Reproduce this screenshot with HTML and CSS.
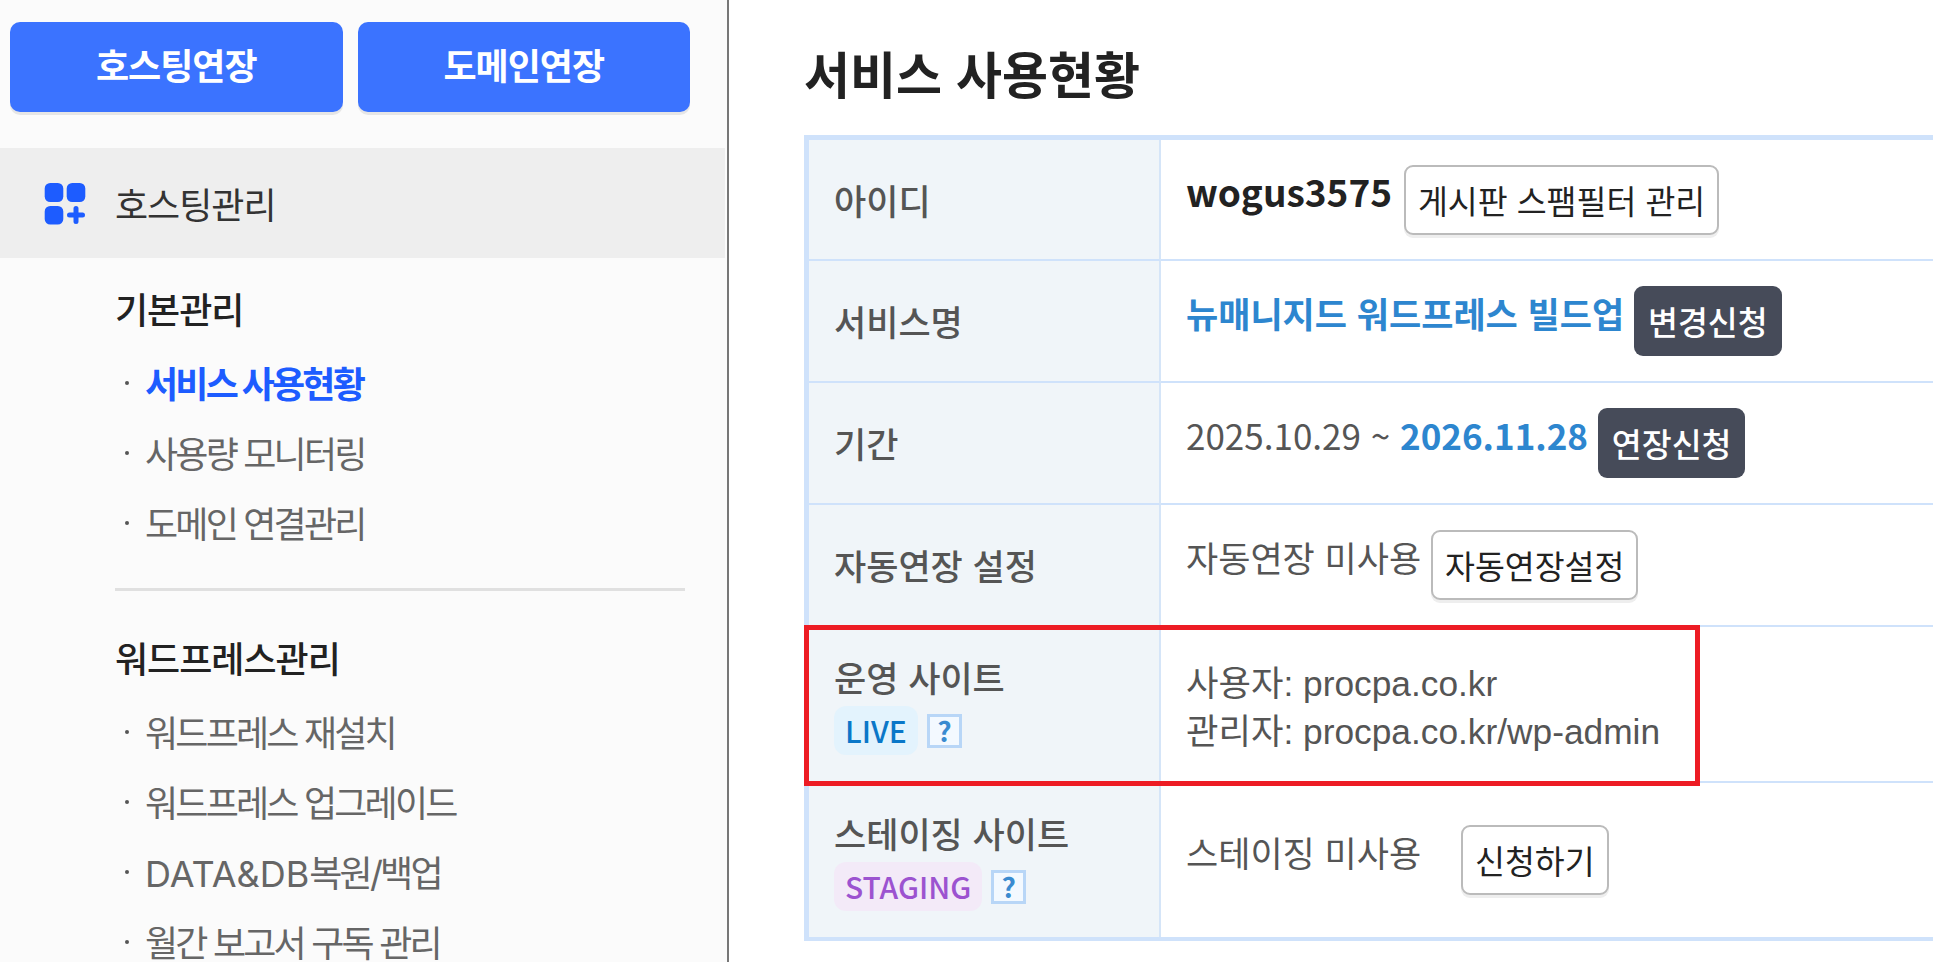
FILE: index.html
```html
<!DOCTYPE html>
<html lang="ko">
<head>
    <meta charset="UTF-8">
    <meta name="viewport" content="width=device-width, initial-scale=1.0">
    <title>서비스 사용현황</title>
    <link rel="stylesheet" href="styles.css">
</head>
<body>
    <aside class="sidebar">
        <div class="top-btns">
            <a class="top-btn">호스팅연장</a>
            <a class="top-btn">도메인연장</a>
        </div>
        <div class="group-title">
            <svg class="group-icon" width="42" height="42" viewBox="0 0 42 42">
                <rect x="0.7" y="0" width="18.6" height="19" rx="5.5" fill="#1d5cff"/>
                <rect x="22.7" y="0" width="18.6" height="19" rx="5.5" fill="#1d5cff"/>
                <rect x="0.7" y="23" width="18.6" height="18.6" rx="5.5" fill="#1d5cff"/>
                <path d="M32 25.5v13M25.5 32h13" stroke="#1d5cff" stroke-width="5" stroke-linecap="round" fill="none"/>
            </svg>
            <span>호스팅관리</span>
        </div>
        <div class="menu">
            <h3>기본관리</h3>
            <ul>
                <li class="active">서비스 사용현황</li>
                <li>사용량 모니터링</li>
                <li>도메인 연결관리</li>
            </ul>
            <hr>
            <h3>워드프레스관리</h3>
            <ul>
                <li>워드프레스 재설치</li>
                <li>워드프레스 업그레이드</li>
                <li><span class="latin">DATA&amp;DB</span>복원/백업</li>
                <li>월간 보고서 구독 관리</li>
            </ul>
        </div>
    </aside>

    <main class="content">
        <h1>서비스 사용현황</h1>
        <div class="table-wrap">
            <table class="info">
                <tr class="row first">
                    <th>아이디</th>
                    <td><strong class="user-id">wogus3575</strong> <a class="btn">게시판 스팸필터 관리</a></td>
                </tr>
                <tr class="row">
                    <th>서비스명</th>
                    <td><strong class="hl">뉴매니지드 워드프레스 빌드업</strong> <a class="btn dark">변경신청</a></td>
                </tr>
                <tr class="row">
                    <th>기간</th>
                    <td>2025.10.29 ~ <strong class="hl">2026.11.28</strong> <a class="btn dark">연장신청</a></td>
                </tr>
                <tr class="row">
                    <th>자동연장 설정</th>
                    <td>자동연장 미사용 <a class="btn">자동연장설정</a></td>
                </tr>
                <tr class="row tall">
                    <th>
                        운영 사이트
                        <div class="tags"><span class="tag live">LIVE</span><span class="help">?</span></div>
                    </th>
                    <td class="links">사용자: procpa.co.kr<br>관리자: procpa.co.kr/wp-admin</td>
                </tr>
                <tr class="row tall last">
                    <th>
                        스테이징 사이트
                        <div class="tags"><span class="tag staging">STAGING</span><span class="help">?</span></div>
                    </th>
                    <td>스테이징 미사용 <a class="btn apply">신청하기</a></td>
                </tr>
            </table>
            <div class="red-box"></div>
        </div>
    </main>
</body>
</html>
```

FILE: styles.css
```css
html, body {
    height: 100%;
}
body {
    margin: 0;
    display: flex;
    height: 962px;
    overflow: hidden;
    background: #fff;
    color: #555;
    font-family: "Noto Sans CJK KR", sans-serif;
}
.sidebar {
    width: 727px;
    flex: none;
    box-sizing: content-box;
    background: #fbfbfb;
    border-right: 2px solid #777;
    font-family: Inter, "Noto Sans CJK KR", sans-serif;
}
.top-btns {
    display: flex;
    gap: 15px;
    padding: 22px 37px 0 10px;
}
.top-btn {
    flex: 1;
    height: 90px;
    line-height: 90px;
    text-align: center;
    background: #3b73ff;
    color: #fff;
    font-size: 36px;
    font-weight: 700;
    letter-spacing: -1px;
    border-radius: 10px;
    box-shadow: 0 3px 0 #e6e6e6;
}
.group-title {
    display: flex;
    align-items: center;
    height: 110px;
    margin-top: 36px;
    padding-left: 44px;
    margin-right: 2px;
    background: #eee;
    color: #333;
    font-size: 36px;
    letter-spacing: -1px;
}
.group-icon {
    margin-top: 2px;
    margin-right: 29px;
}
.menu {
    padding: 0 42px 0 115px;
}
.menu h3 {
    margin: 0 0 4px;
    height: 70px;
    line-height: 70px;
    font-size: 36px;
    font-weight: 500;
    color: #222;
    letter-spacing: -1px;
}
.menu h3:first-child {
    margin-top: 18px;
}
.menu ul {
    list-style: none;
    margin: 0;
    padding: 0;
}
.menu li {
    position: relative;
    height: 70px;
    line-height: 70px;
    padding-left: 30px;
    font-size: 36px;
    color: #666;
    letter-spacing: -2.8px;
}
.menu li::before {
    content: "";
    position: absolute;
    left: 10px;
    top: 31px;
    width: 4px;
    height: 4px;
    border-radius: 50%;
    background: #555;
}
.menu li.active {
    color: #1d5cff;
    font-weight: 700;
}
.menu .latin {
    letter-spacing: 0;
}
.menu hr {
    border: none;
    height: 3px;
    background: #e0e0e0;
    margin: 28px 0 34px;
}
.content {
    flex: 1;
    min-width: 0;
    padding-left: 75px;
    overflow: hidden;
}
h1 {
    margin: 0;
    height: 135px;
    line-height: 145px;
    font-size: 50px;
    font-weight: 700;
    color: #222;
}
.table-wrap {
    position: relative;
    width: 1400px;
}
.info {
    width: 100%;
    border-collapse: separate;
    border-spacing: 0;
    border: 5px solid #cfe2fb;
    border-right: none;
    border-bottom-width: 4px;
    font-size: 35px;
}
.info th {
    width: 352px;
    box-sizing: border-box;
    padding: 0 0 0 25px;
    background: #f0f5f9;
    border-right: 2px solid #d5e5f8;
    border-bottom: 2px solid #cfe2fb;
    font-weight: 500;
    text-align: left;
    color: #555;
    line-height: 48px;
}
.info td {
    padding: 0 0 0 25px;
    border-bottom: 2px solid #cfe2fb;
    color: #555;
}
.row {
    height: 122px;
}
.row.first {
    height: 121px;
}
.row.tall {
    height: 156px;
}
.row.last {
    height: 154px;
}
.row.last th, .row.last td {
    border-bottom: none;
}
.user-id {
    margin-right: 2px;
    color: #222;
    font-size: 37px;
}
.hl {
    color: #2d86cf;
}
.btn {
    display: inline-block;
    height: 66px;
    line-height: 66px;
    padding: 0 12px;
    border: 2px solid #bbb;
    border-radius: 9px;
    background: #fff;
    color: #222;
    font-size: 32.5px;
    box-shadow: 0 3px 0 #eee;
    vertical-align: -7px;
}
.btn.dark {
    height: 70px;
    line-height: 70px;
    border: none;
    padding: 0 14px;
    background: #464b59;
    color: #fff;
    font-weight: 500;
    box-shadow: none;
}
.btn.apply {
    margin-left: 30px;
}
.info td.links {
    font-family: "Liberation Sans", "Noto Sans CJK KR", sans-serif;
    font-size: 35.3px;
    padding-top: 7px;
    line-height: 48px;
}
.tags {
    display: flex;
    align-items: center;
    gap: 9px;
    margin-top: 5px;
}
.tag {
    height: 49px;
    line-height: 49px;
    padding: 0 11px;
    border-radius: 12px;
    font-size: 30px;
    font-weight: 500;
}
.tag.live {
    background: #e3f3fd;
    color: #0a77c8;
}
.tag.staging {
    background: #f3eaf8;
    color: #9c53d0;
}
.help {
    width: 29px;
    height: 28px;
    line-height: 27px;
    text-align: center;
    border: 3px solid #b8d6f7;
    background: #f3f9ff;
    color: #3a8bd0;
    font-size: 28px;
    font-weight: 700;
}
.red-box {
    position: absolute;
    left: 0;
    top: 490px;
    width: 886px;
    height: 151px;
    border: 5px solid #ed1c24;
}
```
